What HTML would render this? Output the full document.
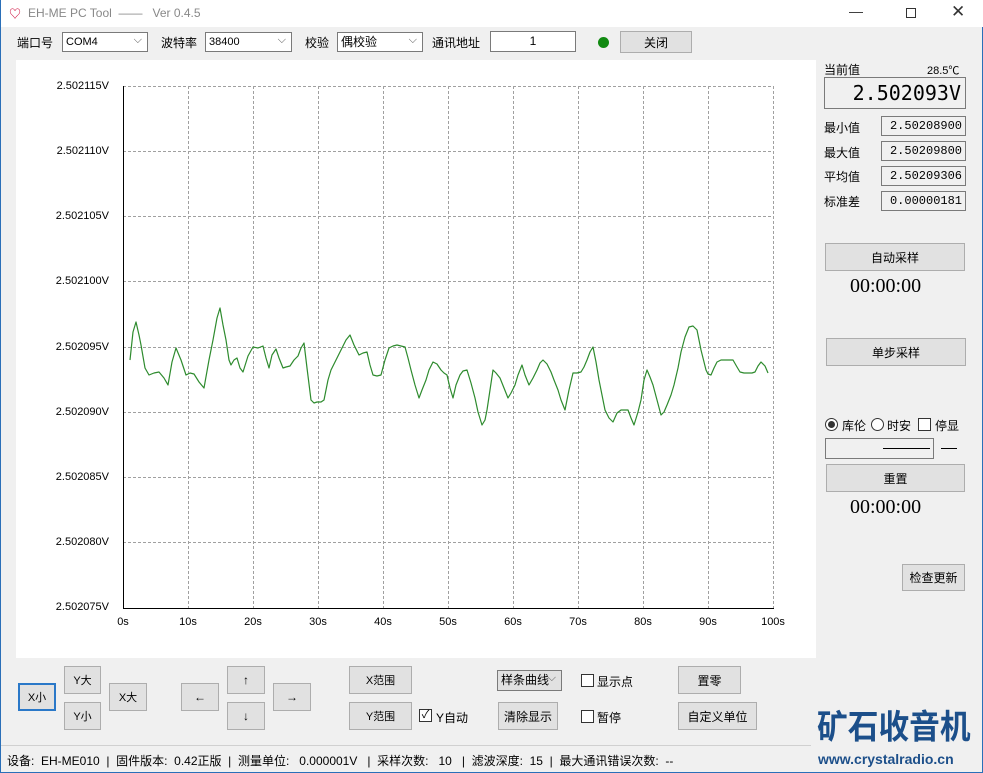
<!DOCTYPE html>
<html><head><meta charset="utf-8"><style>
*{box-sizing:border-box;margin:0;padding:0}
body{width:983px;height:773px;background:#f0f0f0;font-family:"Liberation Sans","Noto Sans CJK SC",sans-serif;font-size:12px;color:#000;position:relative;overflow:hidden;border-left:1px solid #2a6fb8;border-right:1px solid #2a6fb8;border-bottom:1px solid #2a6fb8}
.a{position:absolute}
.btn{position:absolute;background:#e1e1e1;border:1px solid #adadad;display:flex;align-items:center;justify-content:center;font-size:12px}
.sel{position:absolute;background:#fff;border:1px solid #7a7a7a;font-size:11px;padding-left:3px;line-height:18px}
.sel:after{content:"⌵";position:absolute;right:5px;top:-2px;color:#555;font-size:11px}
.box{position:absolute;background:#f0f0f0;border:1px solid #7a7a7a;text-align:right;font-family:"Liberation Mono","Noto Sans CJK SC",monospace;font-size:12px;padding-right:3px;line-height:18px}
.cb{position:absolute;width:13px;height:13px;border:1px solid #333;background:#fff}
.t{position:absolute;white-space:nowrap}
.yl{position:absolute;right:873px;font-size:11px}
.xl{position:absolute;top:616px;font-size:11px;transform:translateX(-50%)}
</style></head><body>
<div class="a" style="left:0;top:0;width:983px;height:27px;background:#fff"></div>
<div class="t" style="left:8px;top:5px;font-size:12px;color:#c03">♡</div>
<div class="t" style="left:27px;top:6px;color:#888;font-size:12px">EH-ME PC Tool &nbsp;—— &nbsp;&nbsp;Ver 0.4.5</div>
<div class="t" style="left:848px;top:3px;font-size:14px;color:#333">—</div>
<div class="a" style="left:905px;top:8px;width:10px;height:10px;border:1px solid #333"></div>
<div class="t" style="left:950px;top:2px;font-size:17px;color:#333">✕</div>

<div class="t" style="left:16px;top:34px">端口号</div>
<div class="sel" style="left:61px;top:32px;width:86px;height:20px">COM4</div>
<div class="t" style="left:160px;top:34px">波特率</div>
<div class="sel" style="left:204px;top:32px;width:87px;height:20px">38400</div>
<div class="t" style="left:304px;top:34px">校验</div>
<div class="sel" style="left:336px;top:32px;width:86px;height:20px;font-size:12px">偶校验</div>
<div class="t" style="left:431px;top:34px">通讯地址</div>
<div class="a" style="left:489px;top:31px;width:86px;height:21px;background:#fff;border:1px solid #7a7a7a;text-align:center;line-height:19px">1</div>
<div class="a" style="left:597px;top:37px;width:11px;height:11px;border-radius:50%;background:#118a11"></div>
<div class="btn" style="left:619px;top:31px;width:72px;height:22px">关闭</div>

<div class="a" style="left:15px;top:60px;width:800px;height:598px;background:#fff"></div>
<svg class="a" style="left:0;top:0" width="983" height="773">
<g stroke="#a0a0a0" stroke-dasharray="3,2" stroke-width="1">
<line x1="187.5" y1="86" x2="187.5" y2="608"/><line x1="252.5" y1="86" x2="252.5" y2="608"/><line x1="317.5" y1="86" x2="317.5" y2="608"/><line x1="382.5" y1="86" x2="382.5" y2="608"/><line x1="447.5" y1="86" x2="447.5" y2="608"/><line x1="512.5" y1="86" x2="512.5" y2="608"/><line x1="577.5" y1="86" x2="577.5" y2="608"/><line x1="642.5" y1="86" x2="642.5" y2="608"/><line x1="707.5" y1="86" x2="707.5" y2="608"/><line x1="772.5" y1="86" x2="772.5" y2="608"/>
<line x1="122" y1="86.5" x2="772" y2="86.5"/><line x1="122" y1="151.5" x2="772" y2="151.5"/><line x1="122" y1="216.5" x2="772" y2="216.5"/><line x1="122" y1="281.5" x2="772" y2="281.5"/><line x1="122" y1="347.5" x2="772" y2="347.5"/><line x1="122" y1="412.5" x2="772" y2="412.5"/><line x1="122" y1="477.5" x2="772" y2="477.5"/><line x1="122" y1="542.5" x2="772" y2="542.5"/>
</g>
<g stroke="#000"><line x1="122.5" y1="86" x2="122.5" y2="609"/><line x1="122" y1="608.5" x2="773" y2="608.5"/></g>
<polyline fill="none" stroke="#2e8b2e" stroke-width="1.2" stroke-linejoin="round" points="129,360 132,332 135,322 138,335 140,345 144,368 148,375 153,373 158,372 163,378 167,385 171,362 175,348 180,360 185,375 189,373 193,374 198,382 203,388 208,360 212,340 216,318 219,308 222,325 225,340 228,360 230,365 233,360 236,358 239,368 242,372 247,356 252,347 257,348 262,346 265,358 268,368 271,355 275,349 278,358 282,368 285,367 289,366 293,360 297,356 300,348 303,343 306,368 310,400 313,403 316,402 320,402 323,400 327,380 330,370 335,360 340,350 345,340 349,335 353,345 358,355 362,353 366,352 369,365 372,375 376,376 380,375 384,360 388,348 392,346 396,345 400,346 404,347 407,358 410,370 414,385 418,398 421,390 425,380 428,370 432,362 436,364 440,370 443,373 446,375 449,388 452,398 455,385 459,375 462,371 466,370 470,383 474,398 477,412 481,425 484,420 486,410 489,390 492,370 495,373 499,378 503,388 507,398 510,393 514,385 517,375 521,365 524,375 528,385 532,378 536,370 539,363 542,360 546,364 550,372 553,380 557,390 560,400 564,410 568,390 572,373 576,373 580,372 583,367 586,360 589,352 592,347 595,362 598,380 601,395 604,410 608,418 612,422 616,413 620,410 624,410 627,410 630,418 633,425 637,412 640,400 643,380 646,370 649,377 652,385 656,400 660,415 663,412 666,405 670,395 673,385 677,368 680,352 684,337 688,327 692,326 696,330 700,350 705,370 707,374 710,375 713,368 716,362 720,360 724,360 728,360 732,360 736,367 739,372 743,373 747,373 751,373 754,372 757,366 760,362 764,366 767,373"/>
</svg>
<div class="yl" style="top:80px">2.502115V</div>
<div class="yl" style="top:145px">2.502110V</div>
<div class="yl" style="top:210px">2.502105V</div>
<div class="yl" style="top:275px">2.502100V</div>
<div class="yl" style="top:341px">2.502095V</div>
<div class="yl" style="top:406px">2.502090V</div>
<div class="yl" style="top:471px">2.502085V</div>
<div class="yl" style="top:536px">2.502080V</div>
<div class="yl" style="top:601px">2.502075V</div>
<div class="xl" style="left:122px">0s</div><div class="xl" style="left:187px">10s</div><div class="xl" style="left:252px">20s</div><div class="xl" style="left:317px">30s</div><div class="xl" style="left:382px">40s</div><div class="xl" style="left:447px">50s</div><div class="xl" style="left:512px">60s</div><div class="xl" style="left:577px">70s</div><div class="xl" style="left:642px">80s</div><div class="xl" style="left:707px">90s</div><div class="xl" style="left:772px">100s</div>

<div class="t" style="left:823px;top:61px">当前值</div>
<div class="t" style="left:926px;top:62px;font-size:11px">28.5℃</div>
<div class="a" style="left:823px;top:77px;width:142px;height:32px;border:1px solid #7a7a7a;background:#f0f0f0;text-align:right;padding-right:4px;font-family:'DejaVu Sans Mono','Liberation Mono',monospace;font-size:20px;line-height:30px">2.502093V</div>
<div class="t" style="left:823px;top:119px">最小值</div><div class="box" style="left:880px;top:116px;width:85px;height:20px">2.50208900</div>
<div class="t" style="left:823px;top:144px">最大值</div><div class="box" style="left:880px;top:141px;width:85px;height:20px">2.50209800</div>
<div class="t" style="left:823px;top:168px">平均值</div><div class="box" style="left:880px;top:166px;width:85px;height:20px">2.50209306</div>
<div class="t" style="left:823px;top:193px">标准差</div><div class="box" style="left:880px;top:191px;width:85px;height:20px">0.00000181</div>
<div class="btn" style="left:824px;top:243px;width:140px;height:28px">自动采样</div>
<div class="t" style="left:849px;top:275px;font-size:20px;font-family:'Liberation Serif',serif">00:00:00</div>
<div class="btn" style="left:825px;top:338px;width:140px;height:28px">单步采样</div>
<div class="a" style="left:824px;top:418px;width:13px;height:13px;border:1px solid #333;border-radius:50%;background:#fff"><div class="a" style="left:2px;top:2px;width:7px;height:7px;border-radius:50%;background:#333"></div></div>
<div class="t" style="left:841px;top:417px">库伦</div>
<div class="a" style="left:870px;top:418px;width:13px;height:13px;border:1px solid #333;border-radius:50%;background:#fff"></div>
<div class="t" style="left:886px;top:417px">时安</div>
<div class="cb" style="left:917px;top:418px"></div>
<div class="t" style="left:934px;top:417px">停显</div>
<div class="a" style="left:824px;top:438px;width:109px;height:21px;border:1px solid #7a7a7a;background:#f0f0f0"></div>
<div class="a" style="left:882px;top:448px;width:47px;height:1px;background:#000"></div>
<div class="a" style="left:940px;top:448px;width:16px;height:1px;background:#000"></div>
<div class="btn" style="left:825px;top:464px;width:139px;height:28px">重置</div>
<div class="t" style="left:849px;top:496px;font-size:20px;font-family:'Liberation Serif',serif">00:00:00</div>
<div class="btn" style="left:901px;top:564px;width:63px;height:27px">检查更新</div>

<div class="btn" style="left:17px;top:683px;width:38px;height:28px;border:2px solid #2a78c8;font-size:11px">X小</div>
<div class="btn" style="left:63px;top:666px;width:37px;height:28px;font-size:11px">Y大</div>
<div class="btn" style="left:63px;top:702px;width:37px;height:28px;font-size:11px">Y小</div>
<div class="btn" style="left:108px;top:683px;width:38px;height:28px;font-size:11px">X大</div>
<div class="btn" style="left:180px;top:683px;width:38px;height:28px">←</div>
<div class="btn" style="left:226px;top:666px;width:38px;height:28px">↑</div>
<div class="btn" style="left:226px;top:702px;width:38px;height:28px">↓</div>
<div class="btn" style="left:272px;top:683px;width:38px;height:28px">→</div>
<div class="btn" style="left:348px;top:666px;width:63px;height:28px;font-size:11px">X范围</div>
<div class="btn" style="left:348px;top:702px;width:63px;height:28px;font-size:11px">Y范围</div>
<div class="cb" style="left:418px;top:709px;font-size:11px;line-height:11px;text-align:center">✓</div>
<div class="t" style="left:435px;top:709px">Y自动</div>
<div class="sel" style="left:496px;top:670px;width:65px;height:21px;background:#e1e1e1;font-size:12px;overflow:hidden">样条曲线</div>
<div class="cb" style="left:580px;top:674px"></div><div class="t" style="left:596px;top:673px">显示点</div>
<div class="btn" style="left:497px;top:702px;width:60px;height:28px">清除显示</div>
<div class="cb" style="left:580px;top:710px"></div><div class="t" style="left:596px;top:709px">暂停</div>
<div class="btn" style="left:677px;top:666px;width:63px;height:28px">置零</div>
<div class="btn" style="left:677px;top:702px;width:79px;height:28px">自定义单位</div>
<div class="t" style="left:816px;top:706px;font-size:32px;font-weight:bold;color:#1c4f8a;line-height:40px;transform:scale(0.96,1.05);transform-origin:left top">矿石收音机</div>
<div class="t" style="left:817px;top:751px;font-size:14px;font-weight:bold;color:#1c4f8a">www.crystalradio.cn</div>

<div class="a" style="left:0;top:745px;width:810px;height:1px;background:#d0d0d0"></div>
<div class="t" style="left:6px;top:752px;font-size:12px">设备: &nbsp;EH-ME010 &nbsp;| &nbsp;固件版本: &nbsp;0.42正版 &nbsp;| &nbsp;测量单位: &nbsp;&nbsp;0.000001V &nbsp;&nbsp;| &nbsp;采样次数: &nbsp;&nbsp;10 &nbsp;&nbsp;| &nbsp;滤波深度: &nbsp;15 &nbsp;| &nbsp;最大通讯错误次数: &nbsp;--</div>
</body></html>
